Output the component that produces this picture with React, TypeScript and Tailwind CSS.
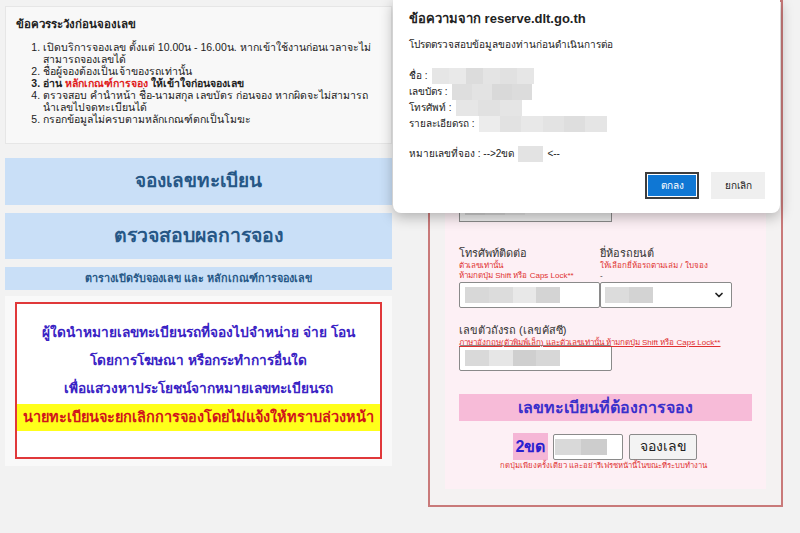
import { ChevronDown } from 'lucide-react'

const font = { fontFamily: 'Tahoma, "Liberation Sans", "Noto Sans", sans-serif' }

function Blur({ w, shades }: { w: string; shades: string[] }) {
  return (
    <span className={`inline-flex h-[16px] ${w} align-middle`}>
      {shades.map((c, i) => (
        <span key={i} className="h-full flex-1" style={{ backgroundColor: c }} />
      ))}
    </span>
  )
}

function Notice() {
  return (
    <div className="mt-[6px] h-[138px] border border-[#e6e6e6] bg-[#f8f8f8] pl-[10px] pt-[10px] text-[#222]">
      <div className="text-[11.5px] font-bold leading-[14px]">ข้อควรระวังก่อนจองเลข</div>
      <ol className="mt-[10px] w-[362px] list-decimal pl-[27px] text-[10.5px] leading-[12px]">
        <li>เปิดบริการจองเลข ตั้งแต่ 10.00น - 16.00น. หากเข้าใช้งานก่อนเวลาจะไม่สามารถจองเลขได้</li>
        <li>ชื่อผู้จองต้องเป็นเจ้าของรถเท่านั้น</li>
        <li className="font-bold">
          อ่าน <span className="text-[#e0201c]">หลักเกณฑ์การจอง</span> ให้เข้าใจก่อนจองเลข
        </li>
        <li>ตรวจสอบ คำนำหน้า ชื่อ-นามสกุล เลขบัตร ก่อนจอง หากผิดจะไม่สามารถนำเลขไปจดทะเบียนได้</li>
        <li>กรอกข้อมูลไม่ครบตามหลักเกณฑ์ตกเป็นโมฆะ</li>
      </ol>
    </div>
  )
}

function Warning() {
  return (
    <div className="mt-[6px] h-[170px] bg-[#f9f9f9] px-[10px] pt-[6px]">
      <div className="flex h-[157px] flex-col items-center border-2 border-[#e0383a] bg-white pt-[15px]">
        <div className="whitespace-nowrap text-[13.7px] font-bold leading-[28px] text-[#3a23c4]">ผู้ใดนำหมายเลขทะเบียนรถที่จองไปจำหน่าย จ่าย โอน</div>
        <div className="whitespace-nowrap text-[13.7px] font-bold leading-[28px] text-[#3a23c4]">โดยการโฆษณา หรือกระทำการอื่นใด</div>
        <div className="whitespace-nowrap text-[13.7px] font-bold leading-[28px] text-[#3a23c4]">เพื่อแสวงหาประโยชน์จากหมายเลขทะเบียนรถ</div>
        <div className="mt-[1px] flex h-[27px] w-full items-center justify-center whitespace-nowrap bg-[#ffff1a] text-[14.5px] font-bold text-[#d0141c]">
          นายทะเบียนจะยกเลิกการจองโดยไม่แจ้งให้ทราบล่วงหน้า
        </div>
      </div>
    </div>
  )
}

function Dialog() {
  return (
    <div className="absolute left-[393px] top-0 h-[213px] w-[387px] rounded-b-[8px] bg-white pl-[16px] pt-[10px] text-[#222] shadow-[0_4px_14px_rgba(0,0,0,0.28)]">
      <div className="text-[13px] font-bold leading-[18px]">ข้อความจาก reserve.dlt.go.th</div>
      <div className="mt-[9px] text-[10px] leading-[16px]">โปรดตรวจสอบข้อมูลของท่านก่อนดำเนินการต่อ</div>
      <div className="mt-[15px] flex flex-col text-[10px] leading-[15.5px]">
        <div className="flex items-center gap-[4px]">
          ชื่อ : <Blur w="w-[102px]" shades={['#e6e6e6', '#e9e9e9', '#dcdcdc', '#e4e4e4', '#e1e1e1', '#e6e6e6']} />
        </div>
        <div className="flex items-center gap-[4px]">
          เลขบัตร : <Blur w="w-[80px]" shades={['#dedede', '#e3e3e3', '#d9d9d9', '#dcdcdc']} />
        </div>
        <div className="flex items-center gap-[4px]">
          โทรศัพท์ : <Blur w="w-[66px]" shades={['#e6e6e6', '#e1e1e1', '#e5e5e5']} />
        </div>
        <div className="flex items-center gap-[4px]">
          รายละเอียดรถ : <Blur w="w-[128px]" shades={['#ececec', '#e2e2e2', '#e8e8e8', '#e3e3e3', '#dedede', '#e5e5e5']} />
        </div>
      </div>
      <div className="mt-[14px] flex items-center gap-[4px] text-[10px] leading-[16px]">
        หมายเลขที่จอง : --&gt;2ขด <Blur w="w-[25px]" shades={['#e3e3e3']} /> &lt;--
      </div>
      <div className="mt-[10px] flex justify-end gap-[12px] pr-[15px]">
        <div className="flex h-[27px] w-[54px] items-center justify-center border-2 border-[#3d3d3d] bg-white p-[1px]">
          <div className="flex h-full w-full items-center justify-center bg-[#0f77d4] text-[10px] text-white">ตกลง</div>
        </div>
        <div className="flex h-[27px] w-[54px] items-center justify-center bg-[#efefef] text-[10px] text-[#222]">ยกเลิก</div>
      </div>
    </div>
  )
}

function Input({ w, shades, bg = 'bg-white' }: { w: string; shades: string[]; bg?: string }) {
  return (
    <div className={`flex h-[26px] ${w} items-center border border-[#8a8a8a] ${bg} rounded-[2px] pl-[5px]`}>
      <Blur w={shades.length > 2 ? 'w-[95px]' : 'w-[70px]'} shades={shades} />
    </div>
  )
}

function BookingForm() {
  return (
    <div className="h-[507px] w-[355px] border-2 border-[#c97a7a] bg-[#f4f2f2] px-[15px]">
      <div className="h-[487px] bg-[#fdf0f5] pl-[14px] pt-[190px]">
        <div className="flex h-[30px] w-[153px] items-end border border-[#8a8a8a] bg-[#ebebeb] pb-[6px] pl-[5px]">
          <Blur w="w-[60px]" shades={['#cfcfcf', '#d5d5d5', '#e0e0e0']} />
        </div>
        <div className="mt-[23px] flex">
          <div className="w-[141px]">
            <div className="text-[11px] leading-[16px] text-[#333]">โทรศัพท์ติดต่อ</div>
            <div className="text-[8px] leading-[10px] text-[#e03030]">ตัวเลขเท่านั้น</div>
            <div className="whitespace-nowrap text-[8px] leading-[10px] text-[#e03030]">ห้ามกดปุ่ม Shift หรือ Caps Lock**</div>
            <div className="mt-[1px]">
              <Input w="w-[141px]" shades={['#d8d8d8', '#dcdcdc', '#e8e8e8', '#d4d4d4']} />
            </div>
          </div>
          <div className="w-[132px]">
            <div className="text-[11px] leading-[16px] text-[#333]">ยี่ห้อรถยนต์</div>
            <div className="whitespace-nowrap text-[8px] leading-[10px] text-[#e03030]">ให้เลือกยี่ห้อรถตามเล่ม / ใบจอง</div>
            <div className="text-[8px] leading-[10px] text-[#333]">-</div>
            <div className="mt-[1px] flex h-[26px] w-[132px] items-center justify-between rounded-[2px] border border-[#8a8a8a] bg-white pl-[4px] pr-[6px]">
              <Blur w="w-[48px]" shades={['#dcdcdc', '#d3d3d3']} />
              <ChevronDown className="h-[12px] w-[12px] text-[#222]" strokeWidth={3.5} />
            </div>
          </div>
        </div>
        <div className="mt-[14px] text-[11px] leading-[16px] text-[#333]">เลขตัวถังรถ (เลขคัสซี)</div>
        <div className="whitespace-nowrap text-[8px] leading-[10px] text-[#e03030] underline decoration-[#e03030]">
          ภาษาอังกฤษ(ตัวพิมพ์เล็ก) และตัวเลขเท่านั้น ห้ามกดปุ่ม Shift หรือ Caps Lock**
        </div>
        <div className="mt-[-3px]">
          <Input w="w-[153px]" shades={['#d9d9d9', '#e6e6e6', '#cfcfcf', '#d7d7d7']} />
        </div>
        <div className="mt-[23px] flex h-[27px] w-[293px] items-center justify-center bg-[#f7bbd8] text-[16px] font-bold text-[#3a2fcb]">
          เลขทะเบียนที่ต้องการจอง
        </div>
        <div className="ml-[54px] mt-[12px] flex items-center">
          <div className="flex h-[27px] w-[35px] items-center justify-center bg-[#f5b6d6] text-[16px] font-bold text-[#2a1fd0]">2ขด</div>
          <div className="ml-[5px] flex h-[26px] w-[70px] items-center rounded-[2px] border border-[#8a8a8a] bg-white pl-[1px]">
            <Blur w="w-[52px]" shades={['#d9d9d9', '#cdcdcd']} />
          </div>
          <div className="ml-[6px] flex h-[26px] w-[68px] items-center justify-center rounded-[2px] border border-[#8a8a8a] bg-[#f3f3f3] text-[14px] text-[#222]">
            จองเลข
          </div>
        </div>
        <div className="ml-[41px] mt-[1px] whitespace-nowrap text-[7.7px] leading-[9px] text-[#e03030]">
          กดปุ่มเพียงครั้งเดียว และอย่ารีเฟรชหน้านี้ในขณะที่ระบบทำงาน
        </div>
      </div>
    </div>
  )
}

export default function App() {
  return (
    <div className="relative flex h-[533px] w-[800px] overflow-hidden bg-[#f2f2f2]" style={font}>
      <div className="ml-[5px] w-[387px]">
        <Notice />
        <div className="mt-[14px] flex h-[47px] items-center justify-center bg-[#c9dff7] text-[19px] font-bold text-[#265786]">
          จองเลขทะเบียน
        </div>
        <div className="mt-[8px] flex h-[46px] items-center justify-center bg-[#c9dff7] text-[19.5px] font-bold text-[#265786]">
          ตรวจสอบผลการจอง
        </div>
        <div className="mt-[8px] flex h-[23px] items-center justify-center bg-[#c9dff7] text-[10.8px] font-bold text-[#265786]">
          ตารางเปิดรับจองเลข และ หลักเกณฑ์การจองเลข
        </div>
        <Warning />
      </div>
      <div className="ml-[36px]">
        <BookingForm />
      </div>
      <Dialog />
    </div>
  )
}
